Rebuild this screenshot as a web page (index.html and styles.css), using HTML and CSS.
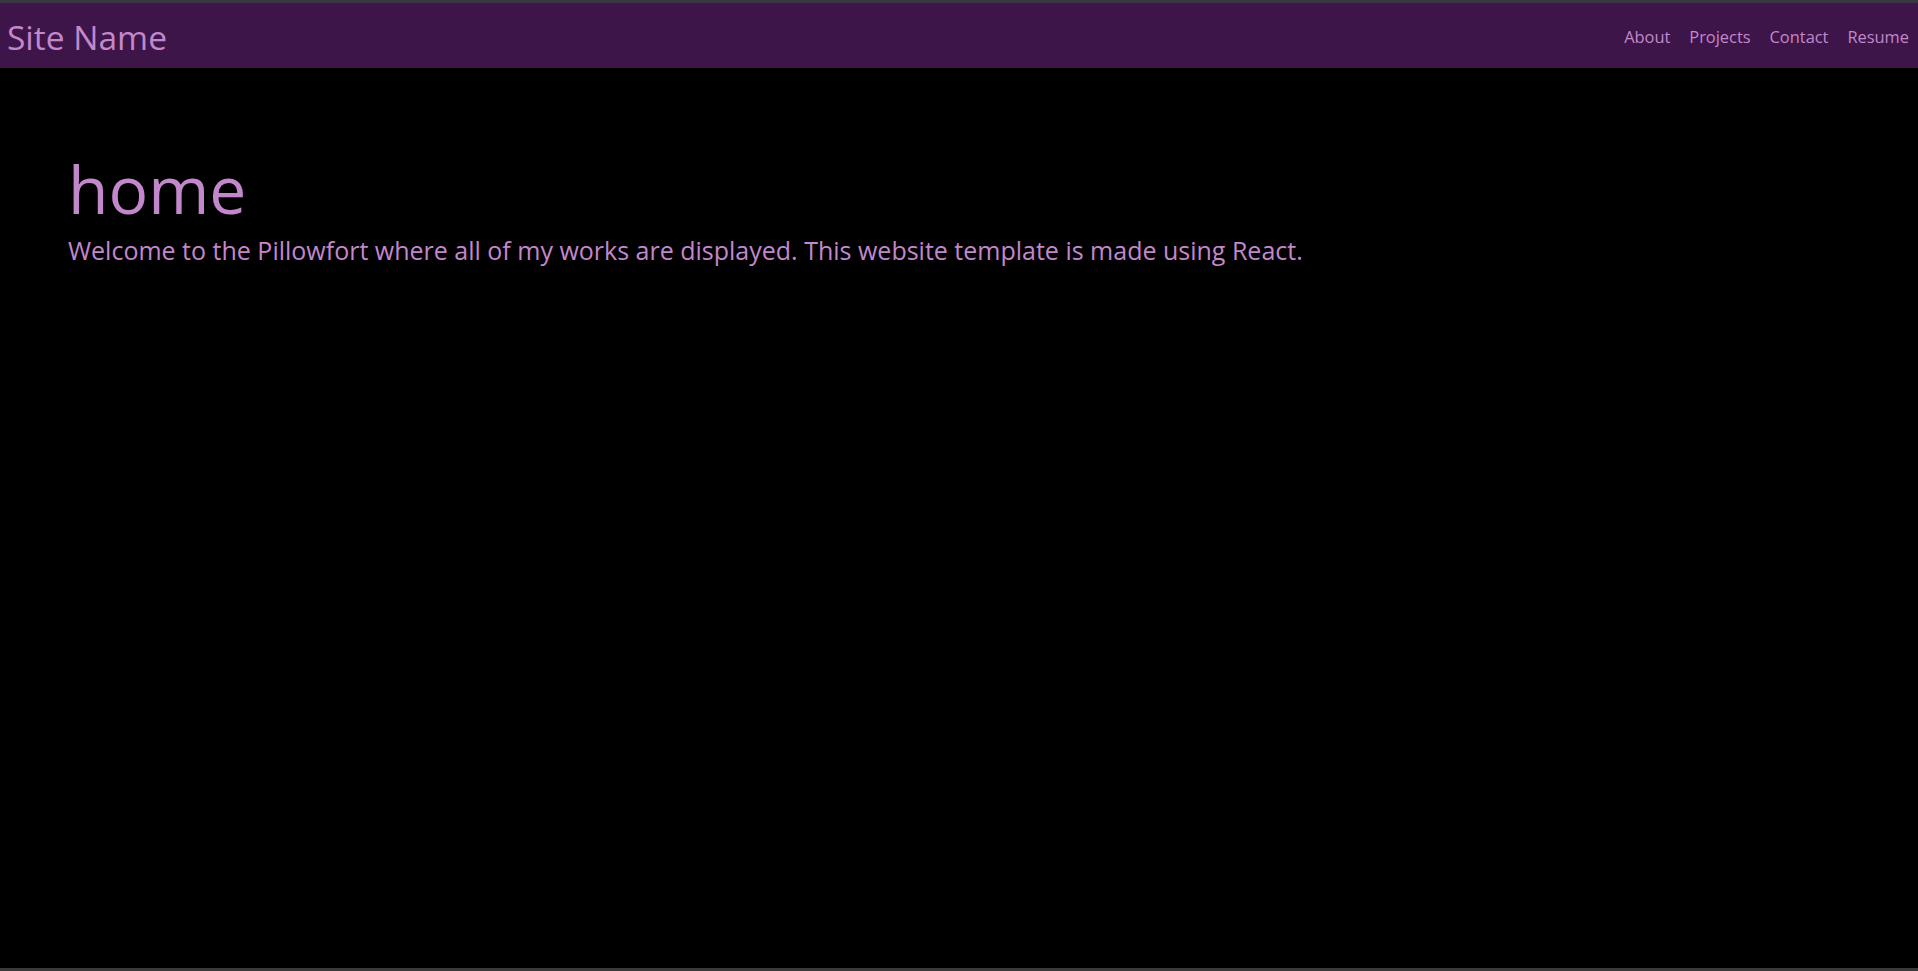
FILE: index.html
```html
<!DOCTYPE html>
<html lang="en">
<head>
<meta charset="utf-8">
<title>Site Name</title>
<link rel="stylesheet" href="styles.css">
</head>
<body>
<div class="frame">
  <header class="navbar">
    <a class="brand" href="#">Site Name</a>
    <nav class="nav">
      <a class="nav-link" href="#">About</a>
      <a class="nav-link" href="#">Projects</a>
      <a class="nav-link" href="#">Contact</a>
      <a class="nav-link" href="#">Resume</a>
    </nav>
  </header>
  <main class="content">
    <h1 class="title">home</h1>
    <p class="lead">Welcome to the Pillowfort where all of my works are displayed. This website template is made using React.</p>
  </main>
</div>
</body>
</html>
```
FILE: styles.css
```css
html, body {
  margin: 0;
  padding: 0;
  background: #000;
}
.frame {
  height: 971px;
  box-sizing: border-box;
  border-top: 3px solid #383742;
  border-bottom: 3px solid #3a3a3a;
  display: flex;
  flex-direction: column;
  font-family: "Open Sans", "Noto Sans", sans-serif;
  color: #c387cc;
}
.navbar {
  height: 65px;
  background: #3d1548;
  display: flex;
  align-items: center;
  justify-content: space-between;
  padding: 0 9px 0 7px;
  flex-shrink: 0;
}
.brand {
  color: #c387cc;
  text-decoration: none;
  font-size: 33.5px;
  padding-top: 2px;
}
.nav {
  display: flex;
  gap: 19px;
  padding-top: 2px;
}
.nav-link {
  color: #c387cc;
  text-decoration: none;
  font-size: 16.4px;
}
.content {
  flex: 1;
  padding: 80px 68px 0;
}
.title {
  margin: 0;
  font-weight: 400;
  font-size: 66px;
  line-height: 80px;
}
.lead {
  margin: 6px 0 0;
  font-size: 25px;
  line-height: 32px;
}
```
